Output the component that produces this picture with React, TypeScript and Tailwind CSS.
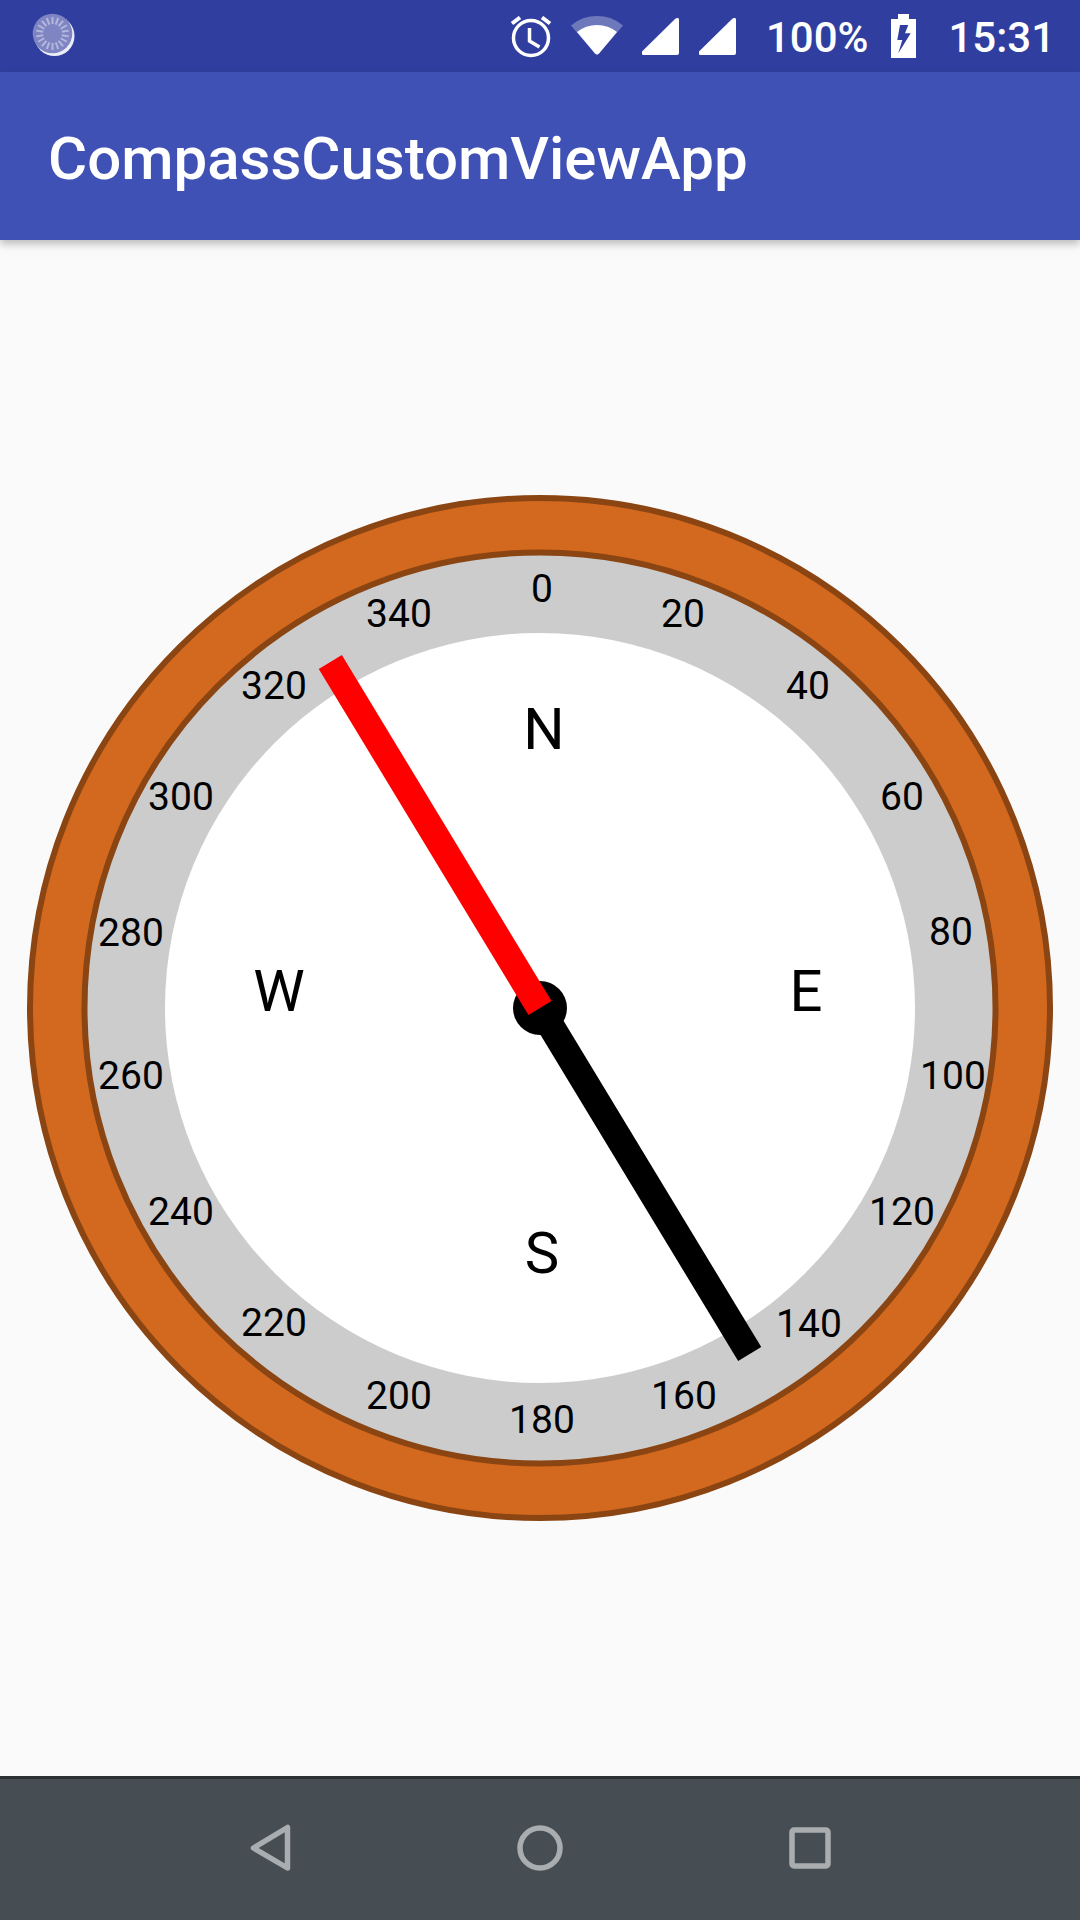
const LABELS: [string, number, number][] = [
    ['0', 542, 589],
    ['20', 683, 614],
    ['40', 808, 686],
    ['60', 902, 797],
    ['80', 951, 932],
    ['100', 953, 1076],
    ['120', 902, 1212],
    ['140', 809, 1324],
    ['160', 684, 1396],
    ['180', 542, 1420],
    ['200', 399, 1396],
    ['220', 274, 1323],
    ['240', 181, 1212],
    ['260', 131, 1076],
    ['280', 131, 933],
    ['300', 181, 797],
    ['320', 274, 686],
    ['340', 399, 614],
];

const POINTS: [string, number, number][] = [
    ['N', 544, 729],
    ['E', 806, 991],
    ['S', 542, 1253],
    ['W', 279, 991],
];

const TICKS = Array.from({ length: 18 }, (_, i) => i * 20);

const Compass = () => (
    <svg viewBox="0 0 1080 1200" className="w-[1080px] h-[1200px] block" style={{ fontFamily: 'Roboto, sans-serif' }}>
        <circle cx="540" cy="528" r="510" fill="#d2691e" stroke="#8b4513" strokeWidth="6" />
        <circle cx="540" cy="528" r="455.5" fill="#cccccc" stroke="#8b4513" strokeWidth="6" />
        <circle cx="540" cy="528" r="375" fill="#ffffff" />
        {LABELS.map(([text, x, y]) => (
            <text key={text} x={x} y={y - 480 + 13} textAnchor="middle" fontSize="39" fill="#000">
                {text}
            </text>
        ))}
        {POINTS.map(([text, x, y]) => (
            <text key={text} x={x} y={y - 480 + 20} textAnchor="middle" fontSize="58" fill="#000">
                {text}
            </text>
        ))}
        <circle cx="540" cy="528" r="27" fill="#000" />
        <line x1="540" y1="528" x2="749.7" y2="874" stroke="#000" strokeWidth="27" />
        <line x1="540" y1="528" x2="330.3" y2="182" stroke="#ff0000" strokeWidth="27" />
    </svg>
);

const StatusBar = () => (
    <div className="h-[72px] bg-[#303f9f] flex items-start text-white font-['Roboto',sans-serif] font-medium text-[42px] leading-[49px]">
        <svg width="44" height="44" viewBox="0 0 44 44" className="ml-[32px] mt-[13px]">
            <circle cx="22.5" cy="23" r="20" fill="#fff" fillOpacity="0.9" />
            <circle cx="20.5" cy="20.5" r="19.8" fill="#7f85c2" />
            {TICKS.map(a => (
                <rect key={a} x="19.5" y="4" width="2" height="7" fill="#b4b8dc" transform={`rotate(${a} 20.5 20.5)`} />
            ))}
        </svg>
        <div className="ml-auto flex items-start mr-[25px]">
            <svg width="42" height="42" viewBox="0 0 42 42" fill="none" stroke="#fff" strokeWidth="3.5" className="mt-[16px]">
                <circle cx="21" cy="22" r="17.5" />
                <path d="M19.5 12v13l10 6" />
                <path d="M2 7.5l8-6M40 7.5l-8-6" strokeWidth="4" />
            </svg>
            <svg width="52" height="41" viewBox="0 0 52 41" className="ml-[19px] mt-[14px]">
                <path d="M0 11.5a40 40 0 0 1 52 0L28 39.5q-2 2-4 0z" fill="#fff" fillOpacity="0.3" />
                <path d="M6 18a32 32 0 0 1 40 0L28 39.5q-2 2-4 0z" fill="#fff" />
            </svg>
            <svg width="37" height="37" viewBox="0 0 37 37" className="ml-[19px] mt-[18px]">
                <path d="M0 33.5L33 1q4-2.500 4 1v33q0 2-2 2H2q-3 0-2-3.500z" fill="#fff" />
            </svg>
            <svg width="37" height="37" viewBox="0 0 37 37" className="ml-[20px] mt-[18px]">
                <path d="M0 33.5L33 1q4-2.500 4 1v33q0 2-2 2H2q-3 0-2-3.500z" fill="#fff" />
            </svg>
            <span className="ml-[30px] mt-[13px]">100%</span>
            <svg width="25" height="44" viewBox="0 0 25 44" className="ml-[23px] mt-[14px]">
                <path d="M7 0h11v5h7v39H0V5h7z" fill="#fff" />
                <path d="M9 11h8.300L14 19.300h5.700L7.300 39.300 11.300 26H6.300z" fill="#303f9f" />
            </svg>
            <span className="ml-[32px] mt-[13px]">15:31</span>
        </div>
    </div>
);

const NavBar = () => (
    <div className="h-[144px] bg-[#464d53] border-t-[3px] border-[#2b3033] flex items-start">
        <svg width="720" height="60" viewBox="0 0 720 60" className="ml-[180px] mt-[39px]" fill="none" stroke="#a9adb0" strokeWidth="5.5" strokeLinejoin="round">
            <path d="M73.500 30L107.500 9.500V50z" />
            <circle cx="360" cy="30" r="20" />
            <rect x="612" y="12" width="36" height="36" rx="2" />
        </svg>
    </div>
);

export default function App() {
    return (
        <div className="w-[1080px] h-[1920px] bg-[#fafafa] flex flex-col overflow-hidden">
            <StatusBar />
            <div className="h-[168px] bg-[#3f51b5] shadow-[0_4px_8px_rgba(0,0,0,0.25)] flex items-center pl-[48px] pt-[5px] relative">
                <span className="text-white text-[60px] font-medium font-['Roboto',sans-serif]">CompassCustomViewApp</span>
            </div>
            <div className="flex-1 pt-[240px]">
                <Compass />
            </div>
            <NavBar />
        </div>
    );
}
